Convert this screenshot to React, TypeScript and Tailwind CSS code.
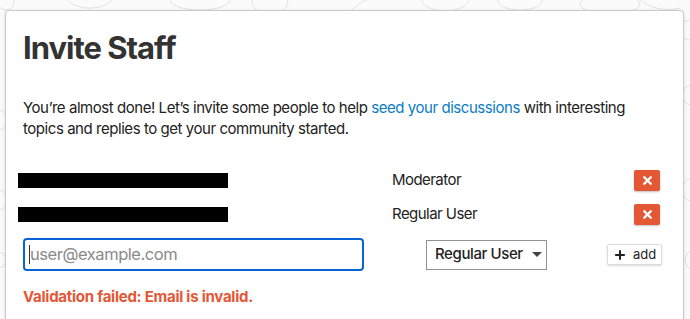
import { X, Plus } from 'lucide-react'

function Doodles() {
  return (
    <svg className="absolute inset-0 h-full w-full" viewBox="0 0 690 319" fill="none" stroke="#e3e3e3" strokeWidth="1">
      <circle cx="6" cy="2" r="8" />
      <ellipse cx="90" cy="-2" rx="22" ry="10" />
      <ellipse cx="200" cy="0" rx="30" ry="10" />
      <ellipse cx="270" cy="2" rx="18" ry="12" />
      <path d="M350 12 C 360 0, 372 -2, 380 -4" />
      <ellipse cx="445" cy="-2" rx="24" ry="13" />
      <ellipse cx="520" cy="1" rx="22" ry="9" />
      <ellipse cx="610" cy="4" rx="30" ry="10" />
      <path d="M640 0 C 650 8, 665 12, 680 8" />
      <circle cx="690" cy="30" r="10" />
      <circle cx="692" cy="95" r="10" />
      <circle cx="694" cy="190" r="12" />
      <circle cx="695" cy="260" r="10" />
      <circle cx="-2" cy="120" r="10" />
      <circle cx="-2" cy="200" r="10" />
      <circle cx="-2" cy="260" r="8" />
    </svg>
  )
}

function StaffRow({ role }: { role: string }) {
  return (
    <div className="flex h-[21px] items-center">
      <div className="h-[15px] w-[210px] bg-black" />
      <div className="ml-[164px] w-[242px] text-[15px] tracking-[-0.55px] text-[#222]">{role}</div>
      <button className="flex h-[21px] w-[26px] items-center justify-center rounded-[2px] bg-[#e45735] text-white shadow-[0_1px_2px_rgba(0,0,0,0.25)]">
        <X size={13} strokeWidth={4.5} />
      </button>
    </div>
  )
}

export default function App() {
  return (
    <div
      className="relative h-[319px] w-[690px] overflow-hidden bg-[#fbfbfb] pl-[5px] pt-[10px]"
      style={{ fontFamily: 'Inter, "Liberation Sans", sans-serif' }}
    >
      <Doodles />
      <div className="relative h-[330px] w-[679px] rounded-[4px] border border-[#c9c9c9] bg-white pl-[17px] pt-[19px] shadow-[0_1px_4px_rgba(0,0,0,0.12)]">
        <h1 className="text-[31px] font-bold leading-[36px] tracking-[-1px] text-[#333]">Invite Staff</h1>
        <p className="mt-[31px] w-[630px] text-[15px] leading-[21px] tracking-[-0.45px] text-[#222]">
          You’re almost done! Let’s invite some people to help{' '}
          <a className="text-[#0a7cc4]">seed your discussions</a> with interesting topics and replies to get your
          community started.
        </p>
        <div className="-ml-[5px] mt-[31px] flex flex-col gap-[13px]">
          <StaffRow role="Moderator" />
          <StaffRow role="Regular User" />
        </div>
        <div className="mt-[13px] flex items-center">
          <div className="flex h-[33px] w-[341px] items-center rounded-[4px] border-2 border-[#0a63d6] pl-[4px]">
            <span className="h-[19px] w-px bg-[#333]" />
            <span className="text-[16.5px] tracking-[-0.45px] text-[#8a8a8a]">user@example.com</span>
          </div>
          <div className="ml-[62px] flex h-[30px] w-[121px] items-center whitespace-nowrap border border-[#919191] pl-[8px] text-[15px] font-medium tracking-[-0.4px] text-[#222]">
            Regular User
            <svg className="ml-[9px]" width="10" height="6" viewBox="0 0 10 6">
              <path d="M0 0 L10 0 L5 5 Z" fill="#444" />
            </svg>
          </div>
          <button className="ml-[60px] flex h-[21px] w-[55px] items-center justify-center gap-[6px] rounded-[2px] border border-[#dcdcdc] bg-white text-[13px] text-[#222] shadow-[0_1px_2px_rgba(0,0,0,0.15)]">
            <Plus size={14} strokeWidth={3.5} />
            add
          </button>
        </div>
        <div className="mt-[15px] text-[15px] font-bold tracking-[-0.25px] text-[#e45735]">
          Validation failed: Email is invalid.
        </div>
      </div>
    </div>
  )
}
